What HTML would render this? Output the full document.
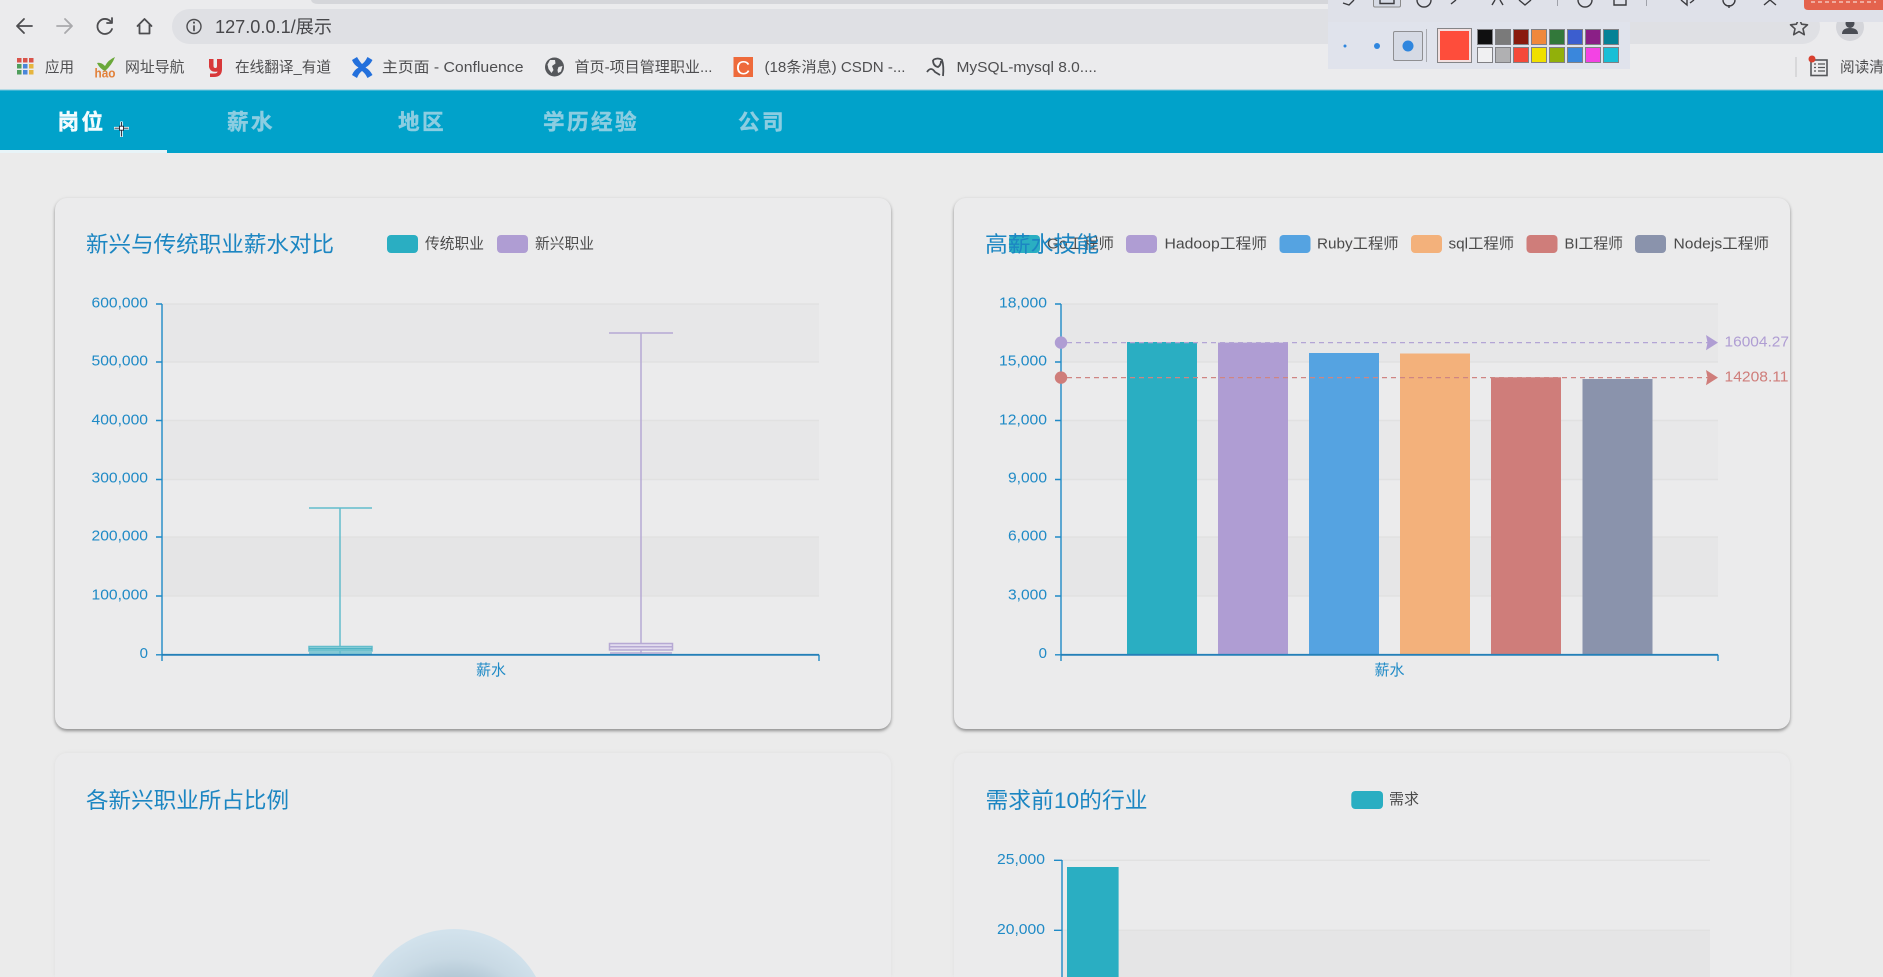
<!DOCTYPE html>
<html lang="zh-CN">
<head>
<meta charset="utf-8">
<title>展示</title>
<style>
html,body{margin:0;padding:0;width:1883px;height:977px;overflow:hidden;background:#ebebeb;}
body{position:relative;font-family:"Liberation Sans","Noto Sans CJK SC",sans-serif;}
.card{position:absolute;background:#ebebec;border-radius:12px;box-shadow:0 2px 3px rgba(0,0,0,.38),0 0 5px rgba(0,0,0,.04);}
.card.b{border-radius:12px 12px 0 0;box-shadow:0 0 5px rgba(0,0,0,.05);}
svg{position:absolute;left:0;top:0;}
text{font-family:"Liberation Sans","Noto Sans CJK SC",sans-serif;}
.title{font-size:22.4px;fill:#1c86c2;font-weight:400;}
.leg{font-size:14.6px;fill:#4a4a4a;}
.ax{font-size:15px;fill:#1f8ac6;text-anchor:end;}
.nm{font-size:15px;fill:#1f8ac6;text-anchor:middle;}
.bm{font-size:14.6px;fill:#4e4e50;}
.nav{font-size:21.6px;font-weight:bold;letter-spacing:2.4px;fill:#8ccde1;stroke:#8ccde1;stroke-width:.4px;}
.grid{stroke:#e1e1e1;stroke-width:1.4;}
.axis{stroke:#1f8ac6;stroke-width:1.4;fill:none;}
</style>
</head>
<body>
<div class="card" style="left:55px;top:198px;width:836px;height:531px;"></div>
<div class="card" style="left:954px;top:198px;width:836px;height:531px;"></div>
<div class="card b" style="left:55px;top:753px;width:836px;height:224px;"></div>
<div class="card b" style="left:954px;top:753px;width:836px;height:224px;"></div>

<svg width="1883" height="977" viewBox="0 0 1883 977" xmlns="http://www.w3.org/2000/svg">
<defs>
<radialGradient id="pie" gradientUnits="userSpaceOnUse" cx="454" cy="1045" r="116">
<stop offset="0" stop-color="#8fa8ba"/><stop offset=".55" stop-color="#b0c5d3"/><stop offset=".75" stop-color="#c8d9e4"/><stop offset="1" stop-color="#d3e3ed"/>
</radialGradient>
</defs>

<!-- browser chrome -->
<rect x="0" y="0" width="1883" height="90" fill="#ebebed"/>
<path d="M311 0H1883V4H318Q312 4 311 0Z" fill="#d5d6da"/>
<rect x="172" y="9" width="1648" height="35" rx="17.5" fill="#dfe0e4"/>
<g fill="none" stroke="#4d4d50" stroke-width="1.800" stroke-linecap="round" stroke-linejoin="round">
<path d="M32 26H17M24 19L17 26L24 33"/>
<path d="M57 26H71M65 19L72 26L65 33" stroke="#a9a9ac"/>
<path d="M111 22A7.500 7.500 0 1 0 112 29"/>
<path d="M112 18V23H107" />
<path d="M137.500 26L144.500 19L151.500 26M139.500 25V33.500H149.500V25"/>
<circle cx="194" cy="26.500" r="7" stroke-width="1.400"/>
<path d="M194 26V30.500" stroke-width="1.700"/>
<path d="M194 22.500V22.700" stroke-width="2"/>
<path d="M1799 18.500L1801.600 24.200L1807.500 24.800L1803 28.800L1804.300 34.700L1799 31.600L1793.700 34.700L1795 28.800L1790.500 24.800L1796.400 24.200Z" stroke-width="1.600"/>
</g>
<text x="215" y="33" font-size="18" fill="#47474a" textLength="117" lengthAdjust="spacingAndGlyphs">127.0.0.1/展示</text>

<!-- avatar -->
<circle cx="1850" cy="27" r="14" fill="#d4d5da"/>
<circle cx="1850" cy="23.500" r="4.500" fill="#4a4d55"/>
<path d="M1842 34Q1842 28 1850 28Q1858 28 1858 34Z" fill="#4a4d55"/>

<!-- bookmarks -->
<g>
<rect x="17" y="58" width="4.500" height="4.500" fill="#d9534a"/><rect x="23" y="58" width="4.500" height="4.500" fill="#d9534a"/><rect x="29" y="58" width="4.500" height="4.500" fill="#d9534a"/>
<rect x="17" y="64" width="4.500" height="4.500" fill="#4f9e5c"/><rect x="23" y="64" width="4.500" height="4.500" fill="#4a86d8"/><rect x="29" y="64" width="4.500" height="4.500" fill="#e6b53e"/>
<rect x="17" y="70" width="4.500" height="4.500" fill="#4f9e5c"/><rect x="23" y="70" width="4.500" height="4.500" fill="#4a86d8"/><rect x="29" y="70" width="4.500" height="4.500" fill="#e6b53e"/>
</g>
<text class="bm" x="45" y="72" textLength="29" lengthAdjust="spacingAndGlyphs">应用</text>

<path d="M97 63Q101 62 105 66Q108 60 115 57Q112 65 105 71Q100 69 97 63Z" fill="#6aa83a"/>
<text x="94.500" y="77.500" font-size="12.500" font-weight="bold" fill="#e2813a" textLength="21" lengthAdjust="spacingAndGlyphs">hao</text>
<text class="bm" x="125" y="72" textLength="59.500" lengthAdjust="spacingAndGlyphs">网址导航</text>

<path d="M209 59H213.500V66Q213.500 68 215.500 68Q217 68 217 66V59H222V69Q222 77 214 77H210V73.500H214Q217.500 73.500 217.500 71.500Q210.500 73 209 67Z" fill="#d8383a"/>
<text class="bm" x="235" y="72" textLength="96" lengthAdjust="spacingAndGlyphs">在线翻译_有道</text>

<path d="M352 60L357 57Q360 62 362 64Q365 62 367.500 57L372.500 60Q370 65 365.500 67.500Q370 70 372.500 75L367.500 78Q365 73 362 71Q359 73 357 78L352 75Q354 70 358.500 67.500Q354 65 352 60Z" fill="#2370dc"/>
<text class="bm" x="382" y="72" textLength="141.500" lengthAdjust="spacingAndGlyphs">主页面 - Confluence</text>

<circle cx="554.500" cy="67" r="9.500" fill="#55575b"/>
<path d="M550 60L555 60L555.500 63.500L552 66L553.500 70L551.500 73L548.500 69L547.500 64.500Z M558.500 67L562.500 66L561 71.500L558 73L557.500 70Z" fill="#ebebed"/>
<text class="bm" x="574.500" y="72" textLength="138" lengthAdjust="spacingAndGlyphs">首页-项目管理职业...</text>

<rect x="733.500" y="57" width="19.500" height="20" fill="#ee6a3b"/>
<text x="736" y="74.500" font-size="19.500" fill="#fff">C</text>
<text class="bm" x="764.500" y="72" textLength="141" lengthAdjust="spacingAndGlyphs">(18条消息) CSDN -...</text>

<path d="M927 72Q931 66 935 72L940 75M933 60Q938 57 942 60Q944 66 943 76M933 60Q933 66 938 67Q941 65 941 61" fill="none" stroke="#4a4c50" stroke-width="1.800"/>
<text class="bm" x="956.500" y="72" textLength="140.500" lengthAdjust="spacingAndGlyphs">MySQL-mysql 8.0....</text>

<line x1="1796" y1="57" x2="1796" y2="77" stroke="#c4c4c7" stroke-width="1"/>
<rect x="1811" y="60" width="16" height="15.500" fill="none" stroke="#55575a" stroke-width="1.600"/>
<path d="M1814 64H1816M1818 64H1825M1814 67.500H1816M1818 67.500H1825M1814 71H1816M1818 71H1825" stroke="#55575a" stroke-width="1.300"/>
<circle cx="1812" cy="59" r="3.500" fill="#d8402f"/>
<text class="bm" x="1840" y="72">阅读清单</text>

<!-- screen-recorder overlay -->
<rect x="1328" y="0" width="555" height="22" fill="#dfe1e9"/>
<rect x="1328" y="22" width="302" height="47" fill="#e0e3ec"/>
<path d="M1804 0H1883V10H1808Q1804 10 1804 6Z" fill="#e4634d"/>
<path d="M1811 2H1876" stroke="#f4c3ba" stroke-width="1.500" stroke-dasharray="4 3"/>
<rect x="1373.500" y="-2" width="27" height="9" rx="1.500" fill="#d6dae4" stroke="#8a8a8a"/>
<g fill="none" stroke="#3a3a3e" stroke-width="1.400">
<path d="M1343 3L1349 5L1354 0"/>
<path d="M1380 -1V3.500H1394V-1"/>
<path d="M1417 0A7 7 0 0 0 1431 0"/>
<path d="M1451 4L1456 0"/>
<path d="M1492 5L1495 0M1503 5L1500 0"/>
<path d="M1519 0L1525 5L1531 0"/>
<path d="M1578 0A7 7 0 0 0 1592 0"/>
<path d="M1614 0V5H1626V0"/>
<path d="M1681 0L1687 5V0M1694 0L1690 3"/>
<path d="M1723 0A6 6 0 0 0 1735 0M1729 5V8"/>
<path d="M1764 5L1770 0L1776 5"/>
</g>
<path d="M1557.500 0V6M1646.500 0V6" stroke="#a0a2aa"/>
<circle cx="1345" cy="46" r="1.500" fill="#2f86de"/>
<circle cx="1377" cy="46" r="3" fill="#2f86de"/>
<rect x="1393.500" y="31.500" width="29" height="29" rx="1.500" fill="#d6dae4" stroke="#8f8f92"/>
<circle cx="1408" cy="46" r="5.500" fill="#2f86de"/>
<line x1="1426.500" y1="29" x2="1426.500" y2="62" stroke="#a8aab0"/>
<rect x="1437.500" y="28.500" width="34" height="34" fill="#f3e0e0" stroke="#858587"/>
<rect x="1440" y="31" width="29" height="29" fill="#fe4d3b"/>
<g stroke="#808084" stroke-width="1">
<rect x="1477.500" y="29.500" width="15" height="15" fill="#0f0f10"/>
<rect x="1495.500" y="29.500" width="15" height="15" fill="#7a7a7a"/>
<rect x="1513.500" y="29.500" width="15" height="15" fill="#8a1a0e"/>
<rect x="1531.500" y="29.500" width="15" height="15" fill="#f0883c"/>
<rect x="1549.500" y="29.500" width="15" height="15" fill="#32783a"/>
<rect x="1567.500" y="29.500" width="15" height="15" fill="#3c5ecf"/>
<rect x="1585.500" y="29.500" width="15" height="15" fill="#8a1f86"/>
<rect x="1603.500" y="29.500" width="15" height="15" fill="#058296"/>
<rect x="1477.500" y="47.500" width="15" height="15" fill="#f0f0f2"/>
<rect x="1495.500" y="47.500" width="15" height="15" fill="#b0b0b2"/>
<rect x="1513.500" y="47.500" width="15" height="15" fill="#f5493a"/>
<rect x="1531.500" y="47.500" width="15" height="15" fill="#f0e000"/>
<rect x="1549.500" y="47.500" width="15" height="15" fill="#92b00a"/>
<rect x="1567.500" y="47.500" width="15" height="15" fill="#3a87dc"/>
<rect x="1585.500" y="47.500" width="15" height="15" fill="#f343e4"/>
<rect x="1603.500" y="47.500" width="15" height="15" fill="#18bfd6"/>
</g>

<!-- nav -->
<rect x="0" y="90" width="1883" height="63" fill="#01a2ca"/>
<rect x="0" y="89.500" width="1883" height="1" fill="#7cc8dd"/>
<rect x="0" y="150" width="167" height="3" fill="#e8f4f8"/>
<text class="nav" x="57.500" y="129.500" style="fill:#f4fbfd;stroke:#f4fbfd">岗位</text>
<text class="nav" x="227" y="129.500">薪水</text>
<text class="nav" x="398" y="129.500">地区</text>
<text class="nav" x="543" y="129.500">学历经验</text>
<text class="nav" x="738" y="129.500">公司</text>
<g>
<path d="M121.500 121.500V137M114 128.200H129" stroke="#fff" stroke-width="2.600"/>
<path d="M121.500 122V136.500M114.500 128.200H128.500" stroke="#223" stroke-width=".9"/>
<rect x="119.500" y="126.200" width="4" height="4" fill="#fff" stroke="#223" stroke-width=".9"/>
</g>

<!-- chart 1 -->
<rect x="162" y="304" width="657" height="58" fill="#e7e7e8"/>
<rect x="162" y="420" width="657" height="59" fill="#e7e7e8"/>
<rect x="162" y="537" width="657" height="59" fill="#e5e5e6"/>
<g class="grid">
<line x1="162" y1="304" x2="819" y2="304"/><line x1="162" y1="362" x2="819" y2="362"/><line x1="162" y1="420.500" x2="819" y2="420.500"/><line x1="162" y1="479.500" x2="819" y2="479.500"/><line x1="162" y1="537" x2="819" y2="537"/><line x1="162" y1="596" x2="819" y2="596"/>
</g>
<path class="axis" d="M162 304V654.800M156 304H162M156 362H162M156 420.500H162M156 479.500H162M156 537H162M156 596H162M156 654.800H162M162 654.800V661M819 654.800V661"/>
<line x1="162" y1="654.800" x2="819" y2="654.800" stroke="#2480b8" stroke-width="1.800"/>
<text class="ax" x="148" y="307.500" textLength="56.500" lengthAdjust="spacingAndGlyphs">600,000</text>
<text class="ax" x="148" y="365.500" textLength="56.500" lengthAdjust="spacingAndGlyphs">500,000</text>
<text class="ax" x="148" y="424.500" textLength="56.500" lengthAdjust="spacingAndGlyphs">400,000</text>
<text class="ax" x="148" y="482.500" textLength="56.500" lengthAdjust="spacingAndGlyphs">300,000</text>
<text class="ax" x="148" y="540.500" textLength="56.500" lengthAdjust="spacingAndGlyphs">200,000</text>
<text class="ax" x="148" y="599.500" textLength="56.500" lengthAdjust="spacingAndGlyphs">100,000</text>
<text class="ax" x="148" y="658">0</text>
<text class="nm" x="491" y="675">薪水</text>
<g fill="none" stroke="#62bccb" stroke-width="1.500">
<path d="M340 508V646M309 508H372M340 651V654M309 653H372"/>
<rect x="309" y="646.500" width="63" height="4.500" fill="#8fd0da"/>
<path d="M309 648.700H372" stroke="#4eb3c4"/>
</g>
<g fill="none" stroke="#b6a9d4" stroke-width="1.500">
<path d="M641 333V643M609 333H673M641 650V654M610 653H672"/>
<rect x="609.500" y="643.500" width="63" height="6.500" fill="#e2dcee"/>
<path d="M609.500 646.800H672.500"/>
</g>
<rect x="387" y="235" width="31" height="18" rx="4" fill="#2aaec2"/>
<text class="leg" x="425" y="248.500" textLength="59" lengthAdjust="spacingAndGlyphs">传统职业</text>
<rect x="497" y="235" width="31" height="18" rx="4" fill="#af9dd3"/>
<text class="leg" x="535" y="248.500" textLength="59" lengthAdjust="spacingAndGlyphs">新兴职业</text>
<text class="title" x="86" y="252" textLength="248" lengthAdjust="spacingAndGlyphs">新兴与传统职业薪水对比</text>

<!-- chart 2 -->
<rect x="1061" y="304" width="657" height="58" fill="#e7e7e8"/>
<rect x="1061" y="420" width="657" height="59" fill="#e8e8e9"/>
<rect x="1061" y="537" width="657" height="59" fill="#e6e6e7"/>
<g class="grid">
<line x1="1061" y1="304" x2="1718" y2="304"/><line x1="1061" y1="362" x2="1718" y2="362"/><line x1="1061" y1="420.500" x2="1718" y2="420.500"/><line x1="1061" y1="479.500" x2="1718" y2="479.500"/><line x1="1061" y1="537" x2="1718" y2="537"/><line x1="1061" y1="596" x2="1718" y2="596"/>
</g>
<rect x="1127" y="342" width="70" height="312.800" fill="#2aaec2"/>
<rect x="1218" y="342.600" width="70" height="312.200" fill="#af9dd3"/>
<rect x="1309" y="353" width="70" height="301.800" fill="#55a3e1"/>
<rect x="1400" y="353.500" width="70" height="301.300" fill="#f3b17b"/>
<rect x="1491" y="377.300" width="70" height="277.500" fill="#cf7d7a"/>
<rect x="1582.500" y="379" width="70" height="275.800" fill="#8a93ac"/>
<path class="axis" d="M1061 304V654.800M1055 304H1061M1055 362H1061M1055 420.500H1061M1055 479.500H1061M1055 537H1061M1055 596H1061M1055 654.800H1061M1061 654.800V661M1718 654.800V661"/>
<line x1="1061" y1="654.800" x2="1718" y2="654.800" stroke="#2480b8" stroke-width="1.800"/>
<text class="ax" x="1047" y="307.500" textLength="48" lengthAdjust="spacingAndGlyphs">18,000</text>
<text class="ax" x="1047" y="365.500" textLength="48" lengthAdjust="spacingAndGlyphs">15,000</text>
<text class="ax" x="1047" y="424.500" textLength="48" lengthAdjust="spacingAndGlyphs">12,000</text>
<text class="ax" x="1047" y="482.500" textLength="39" lengthAdjust="spacingAndGlyphs">9,000</text>
<text class="ax" x="1047" y="540.500" textLength="39" lengthAdjust="spacingAndGlyphs">6,000</text>
<text class="ax" x="1047" y="599.500" textLength="39" lengthAdjust="spacingAndGlyphs">3,000</text>
<text class="ax" x="1047" y="658">0</text>
<text class="nm" x="1389.500" y="675">薪水</text>
<line x1="1067" y1="342.600" x2="1708" y2="342.600" stroke="#b3a5d5" stroke-width="1.300" stroke-dasharray="5 4"/>
<line x1="1067" y1="377.600" x2="1708" y2="377.600" stroke="#cf8583" stroke-width="1.300" stroke-dasharray="5 4"/>
<circle cx="1061" cy="342.600" r="6.200" fill="#af9dd3"/>
<circle cx="1061" cy="377.600" r="6.200" fill="#cf7d7a"/>
<path d="M1706 335L1718 342.600L1706 350.200L1707.500 342.600Z" fill="#af9dd3"/>
<path d="M1706 370L1718 377.600L1706 385.200L1707.500 377.600Z" fill="#cf7d7a"/>
<text x="1724.500" y="346.500" font-size="15" fill="#af9dd3" textLength="64.500" lengthAdjust="spacingAndGlyphs">16004.27</text>
<text x="1724.500" y="381.500" font-size="15" fill="#cf7d7a" textLength="64" lengthAdjust="spacingAndGlyphs">14208.11</text>

<rect x="1009" y="235" width="31" height="18" rx="4" fill="#2aaec2"/>
<text class="leg" x="1047" y="248.500" textLength="67" lengthAdjust="spacingAndGlyphs">Go工程师</text>
<rect x="1126" y="235" width="31" height="18" rx="4" fill="#af9dd3"/>
<text class="leg" x="1164.500" y="248.500" textLength="102.500" lengthAdjust="spacingAndGlyphs">Hadoop工程师</text>
<rect x="1279.500" y="235" width="31" height="18" rx="4" fill="#55a3e1"/>
<text class="leg" x="1317" y="248.500" textLength="81.500" lengthAdjust="spacingAndGlyphs">Ruby工程师</text>
<rect x="1411" y="235" width="31" height="18" rx="4" fill="#f3b17b"/>
<text class="leg" x="1448.500" y="248.500" textLength="65.500" lengthAdjust="spacingAndGlyphs">sql工程师</text>
<rect x="1526.500" y="235" width="31" height="18" rx="4" fill="#cf7d7a"/>
<text class="leg" x="1564.500" y="248.500" textLength="58.500" lengthAdjust="spacingAndGlyphs">BI工程师</text>
<rect x="1635" y="235" width="31" height="18" rx="4" fill="#8a93ac"/>
<text class="leg" x="1673.500" y="248.500" textLength="95.500" lengthAdjust="spacingAndGlyphs">Nodejs工程师</text>
<text class="title" x="985" y="252" textLength="114" lengthAdjust="spacingAndGlyphs">高薪水技能</text>

<!-- chart 3 -->
<text class="title" x="86" y="808" textLength="203" lengthAdjust="spacingAndGlyphs">各新兴职业所占比例</text>
<path d="M372 977A94 94 0 0 1 536 977Z" fill="url(#pie)"/>

<!-- chart 4 -->
<rect x="1062" y="930" width="648" height="47" fill="#e5e5e6"/>
<g class="grid">
<line x1="1062" y1="860.300" x2="1710" y2="860.300"/><line x1="1062" y1="930.300" x2="1710" y2="930.300"/>
</g>
<rect x="1067" y="867" width="51.600" height="110" fill="#2aaec2"/>
<path class="axis" d="M1062 860V977M1054 860.300H1062M1054 930.300H1062"/>
<text class="ax" x="1045" y="864" textLength="48" lengthAdjust="spacingAndGlyphs">25,000</text>
<text class="ax" x="1045" y="934" textLength="48" lengthAdjust="spacingAndGlyphs">20,000</text>
<rect x="1351.300" y="791" width="31.700" height="18" rx="4" fill="#2aaec2"/>
<text class="leg" x="1389" y="804" textLength="30" lengthAdjust="spacingAndGlyphs">需求</text>
<text class="title" x="985.500" y="808" textLength="162" lengthAdjust="spacingAndGlyphs">需求前10的行业</text>
</svg>
</body>
</html>
